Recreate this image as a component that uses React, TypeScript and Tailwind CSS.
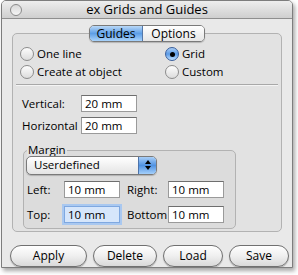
import React from "react";

const font = { fontFamily: '"Lucida Grande", "Open Sans", "DejaVu Sans", sans-serif' };

function Radio({ label, checked }: { label: string; checked?: boolean }) {
  return (
    <div className="flex items-center h-[18px]">
      {checked ? (
        <div className="w-[14px] h-[14px] rounded-full border border-[#3a5f9c] bg-gradient-to-b from-[#a9cdf5] via-[#5b9be6] to-[#bfe0ff] flex items-center justify-center">
          <div className="w-[5px] h-[5px] rounded-full bg-black" />
        </div>
      ) : (
        <div className="w-[14px] h-[14px] rounded-full border border-[#8c8c8c] bg-gradient-to-b from-[#fdfdfd] to-[#dcdcdc]" />
      )}
      <span className="ml-[3px] text-[11.5px] text-black">{label}</span>
    </div>
  );
}

function Field({ value, focus }: { value: string; focus?: boolean }) {
  return (
    <div
      className={
        "w-[56px] h-[17px] flex items-center pl-[3px] text-[11.5px] text-black border" +
        (focus
          ? " border-[#7fa8e0] bg-[#d6e6fb] shadow-[0_0_0_2px_#a9c8f0]"
          : " border-[#9a9a9a] border-t-[#6e6e6e] bg-white")
      }
    >
      {value}
    </div>
  );
}

function Btn({ label, w }: { label: string; w: string }) {
  return (
    <div
      className={
        "h-[22px] rounded-full border border-[#707070] bg-gradient-to-b from-[#ffffff] via-[#efefef] to-[#d9d9d9] flex items-center justify-center text-[12px] text-black shadow-[0_1px_1px_rgba(0,0,0,0.25)] " +
        w
      }
    >
      {label}
    </div>
  );
}

export default function App() {
  return (
    <div className="w-[298px] h-[275px] bg-white" style={font}>
      <div className="ml-[1px] w-[292px] h-[268px] border border-[#7d7d7d] rounded-t-[5px] bg-[#e9e9e9] shadow-[2px_3px_4px_rgba(0,0,0,0.35)] flex flex-col overflow-hidden">
        <div className="h-[18px] shrink-0 bg-gradient-to-b from-[#eeeeee] to-[#cfcfcf] border-b border-[#8f8f8f] flex items-center">
          <div className="ml-[8px] w-[12px] h-[12px] rounded-full border border-[#8a8a8a] bg-gradient-to-b from-[#d9d9d9] to-[#f5f5f5]" />
          <div className="flex-1 text-center text-[13px] text-black -ml-[20px]">ex Grids and Guides</div>
        </div>

        <div className="flex justify-center mt-[6px] relative z-10">
          <div className="flex h-[17px] rounded-[5px] border border-[#7a7a7a] overflow-hidden text-[12px] shadow-[0_1px_1px_rgba(0,0,0,0.2)]">
            <div className="w-[53px] flex items-center justify-center bg-gradient-to-b from-[#b9d8f7] via-[#5d9ee6] to-[#a9d3fb] text-black border-r border-[#5477a8]">
              Guides
            </div>
            <div className="w-[61px] flex items-center justify-center bg-gradient-to-b from-[#ffffff] to-[#e6e6e6] text-black">
              Options
            </div>
          </div>
        </div>

        <div className="mx-[10px] -mt-[9px] h-[199px] rounded-[5px] border border-[#b2b2b2] bg-[#e2e2e2] flex flex-col">
          <div className="flex mt-[11px] ml-[7px]">
            <div className="w-[145px] flex flex-col">
              <Radio label="One line" />
              <Radio label="Create at object" />
            </div>
            <div className="flex flex-col">
              <Radio label="Grid" checked />
              <Radio label="Custom" />
            </div>
          </div>
          <div className="mx-[3px] mt-[3px] h-[2px] border-t border-[#a8a8a8] border-b border-b-[#f4f4f4]" />

          <div className="flex items-center mt-[9px] ml-[9px]">
            <span className="w-[59px] text-[11.5px] text-black">Vertical:</span>
            <Field value="20 mm" />
          </div>
          <div className="flex items-center mt-[5px] ml-[9px]">
            <span className="w-[59px] text-[11.5px] text-black">Horizontal</span>
            <Field value="20 mm" />
          </div>

          <div className="ml-[10px] mt-[15px] w-[213px] h-[79px] rounded-[5px] border border-[#b2b2b2] bg-[#dcdcdc] flex flex-col">
            <div className="-mt-[8px] ml-[3px] self-start px-[1px] bg-[#e2e2e2] text-[11.5px] leading-[14px] text-black">Margin</div>
            <div className="ml-[2px] mt-[-1px] w-[131px] h-[19px] rounded-[5px] border border-[#7a7a7a] bg-gradient-to-b from-[#ffffff] to-[#e4e4e4] flex items-center overflow-hidden shadow-[0_1px_1px_rgba(0,0,0,0.2)]">
              <span className="flex-1 pl-[7px] text-[11.5px] text-black">Userdefined</span>
              <div className="w-[18px] h-full bg-gradient-to-b from-[#a9cff7] via-[#4f92e2] to-[#a5d0fb] border-l border-[#4d73aa] flex flex-col items-center justify-center gap-[2px]">
                <svg width="6" height="4" viewBox="0 0 6 4"><path d="M0 4 L3 0 L6 4 Z" fill="#000" /></svg>
                <svg width="6" height="4" viewBox="0 0 6 4"><path d="M0 0 L3 4 L6 0 Z" fill="#000" /></svg>
              </div>
            </div>
            <div className="flex items-center mt-[6px] ml-[3px]">
              <span className="w-[37px] text-[11.5px] text-black">Left:</span>
              <Field value="10 mm" />
              <span className="ml-[7px] w-[41px] text-[11.5px] text-black">Right:</span>
              <Field value="10 mm" />
            </div>
            <div className="flex items-center mt-[8px] ml-[3px]">
              <span className="w-[37px] text-[11.5px] text-black">Top:</span>
              <Field value="10 mm" focus />
              <span className="ml-[7px] w-[41px] text-[11.5px] text-black">Bottom</span>
              <Field value="10 mm" />
            </div>
          </div>
        </div>

        <div className="flex mt-[13px] ml-[8px] gap-[6px]">
          <Btn label="Apply" w="w-[77px]" />
          <Btn label="Delete" w="w-[64px]" />
          <Btn label="Load" w="w-[60px]" />
          <Btn label="Save" w="w-[60px]" />
        </div>
      </div>
    </div>
  );
}
